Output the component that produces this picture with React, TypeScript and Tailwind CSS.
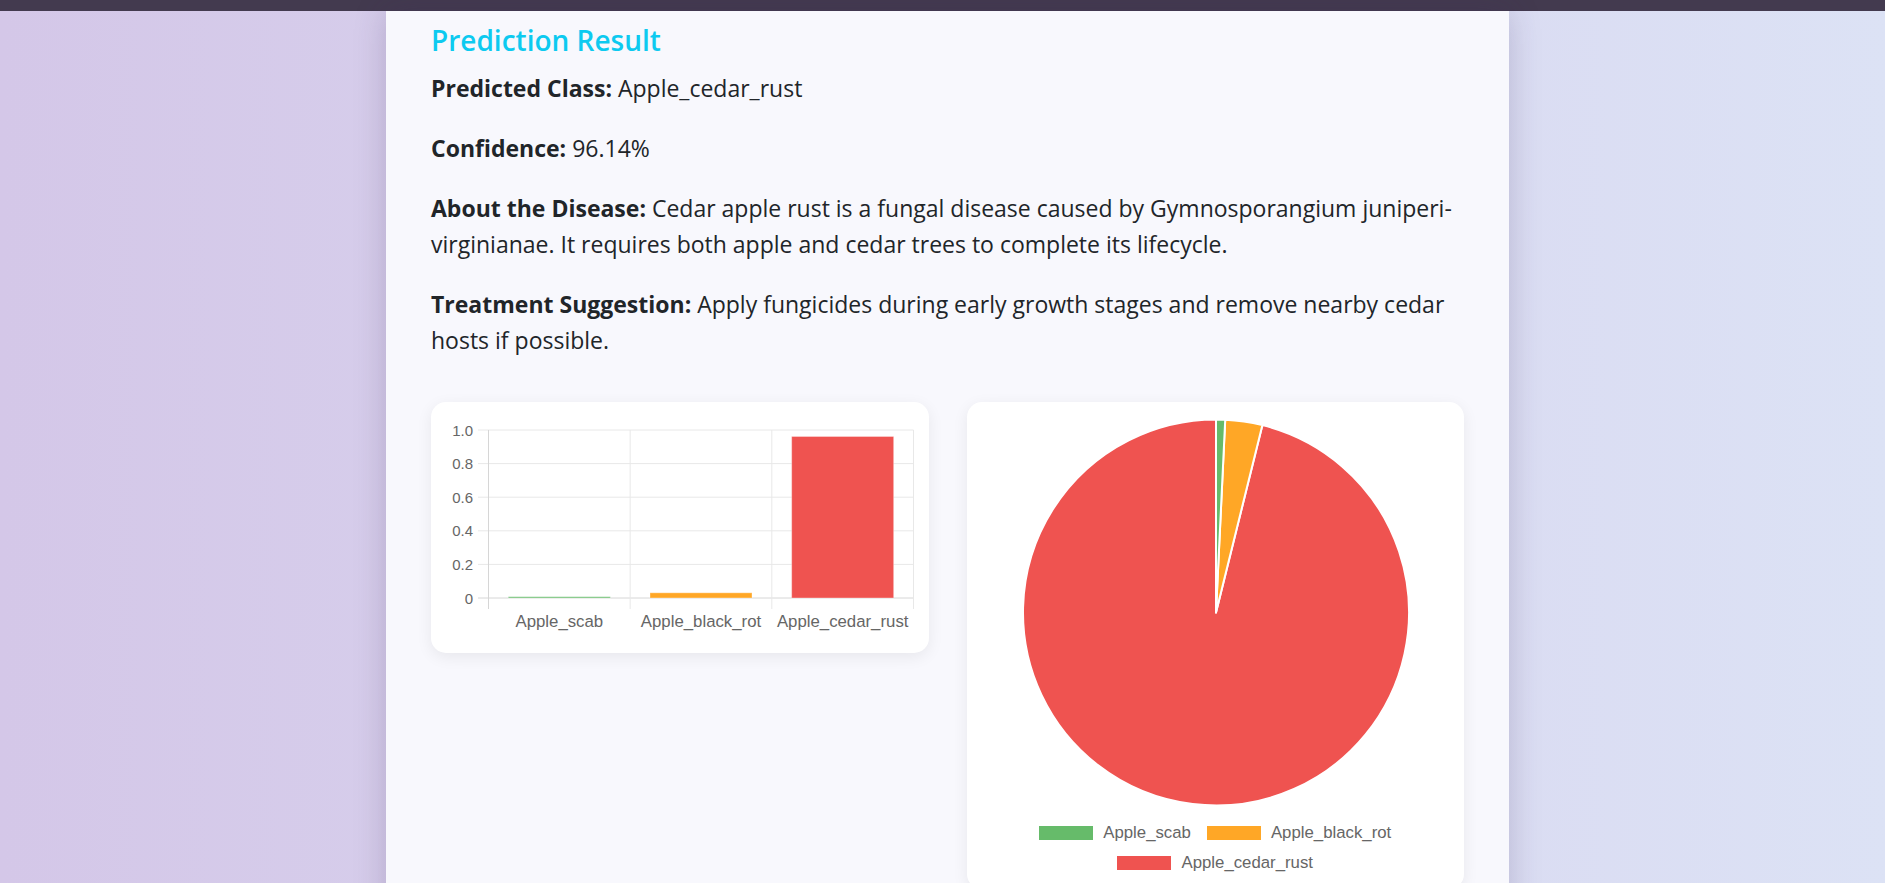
import React from "react";

const bars = [
  { label: "Apple_scab", value: 0.0076, color: "#66bb6a" },
  { label: "Apple_black_rot", value: 0.031, color: "#ffa726" },
  { label: "Apple_cedar_rust", value: 0.9614, color: "#ef5350" },
];

const ticks = ["1.0", "0.8", "0.6", "0.4", "0.2", "0"];

function BarChart() {
  const top = 13;
  const zero = 181;
  const step = (zero - top) / 5;
  const left = 42.5;
  const right = 467.5;
  const col = (right - left) / 3;
  return (
    <svg width="468" height="221" viewBox="0 0 468 221" className="block overflow-visible">
      {ticks.map((t, i) => (
        <g key={t}>
          <line x1={32} x2={right} y1={top + i * step} y2={top + i * step} stroke={i === 5 ? "#d6d6d6" : "#e8e8e8"} strokeWidth="1" />
          <text x={27} y={top + i * step} textAnchor="end" dominantBaseline="central" fontSize="15" fill="#666" fontFamily="'Liberation Sans', Arial, sans-serif">{t}</text>
        </g>
      ))}
      {[0, 1, 2, 3].map((i) => (
        <line key={i} x1={left + i * col} x2={left + i * col} y1={top} y2={192} stroke={i === 0 ? "#d6d6d6" : "#e8e8e8"} strokeWidth="1" />
      ))}
      {bars.map((b, i) => {
        const cx = left + col * i + col / 2;
        const h = b.value * (zero - top);
        return (
          <g key={b.label}>
            <rect x={cx - 51} y={zero - h} width={102} height={h} fill={b.color} stroke="rgba(255,255,255,0.35)" strokeWidth="1" />
            <text x={cx} y={204.5} textAnchor="middle" dominantBaseline="central" fontSize="16.8" fill="#666" fontFamily="'Liberation Sans', Arial, sans-serif">{b.label}</text>
          </g>
        );
      })}
    </svg>
  );
}

function PieChart() {
  return (
    <svg width="468" height="390" viewBox="0 0 468 390" className="block">
      <path d="M234 195.5 L280.35 8.15 A193 193 0 1 1 234 2.5 Z" fill="#ef5350" stroke="#fff" strokeWidth="2" strokeLinejoin="round" />
      <path d="M234 195.5 L243.21 2.72 A193 193 0 0 1 280.35 8.15 Z" fill="#ffa726" stroke="#fff" strokeWidth="2" strokeLinejoin="round" />
      <path d="M234 195.5 L234 2.5 A193 193 0 0 1 243.21 2.72 Z" fill="#66bb6a" stroke="#fff" strokeWidth="2" strokeLinejoin="round" />
    </svg>
  );
}

function LegendItem({ color, label }: { color: string; label: string }) {
  return (
    <div className="flex items-center gap-[10px]">
      <span className="block h-[14px] w-[54px]" style={{ backgroundColor: color }} />
      <span className="text-[16.8px] leading-[20px] text-[#666] font-['Liberation_Sans',Arial,sans-serif]">{label}</span>
    </div>
  );
}

export default function App() {
  return (
    <div className="min-h-screen bg-gradient-to-r from-[#d4c7e8] to-[#dce2f5] font-['Open_Sans','Noto_Sans',sans-serif] text-[#212529]">
      <div className="h-[11px] bg-[#433a4f]" />
      <div className="flex justify-center pl-[10px]">
        <div className="w-[1123px] bg-[#f8f8fd] px-[45px] pt-[12px] pb-12 shadow-[0_0_30px_rgba(60,40,90,0.22)]">
          <h2 className="text-[28px] leading-[34px] font-semibold text-[#0dcaf0]">Prediction Result</h2>
          <div className="mt-[13px] text-[23px] leading-[36px]">
            <p className="mb-[24px]"><strong className="font-bold">Predicted Class:</strong> Apple_cedar_rust</p>
            <p className="mb-[24px]"><strong className="font-bold">Confidence:</strong> 96.14%</p>
            <p className="mb-[24px]"><strong className="font-bold">About the Disease:</strong> Cedar apple rust is a fungal disease caused by Gymnosporangium juniperi-virginianae. It requires both apple and cedar trees to complete its lifecycle.</p>
            <p><strong className="font-bold">Treatment Suggestion:</strong> Apply fungicides during early growth stages and remove nearby cedar hosts if possible.</p>
          </div>
          <div className="mt-[44px] grid grid-cols-2 items-start gap-[38px]">
            <div className="rounded-[15px] bg-white p-[15px] shadow-[0_4px_16px_rgba(0,0,0,0.07)]">
              <BarChart />
            </div>
            <div className="rounded-[15px] bg-white px-[15px] pt-[15px] pb-[16px] shadow-[0_4px_16px_rgba(0,0,0,0.07)]">
              <PieChart />
              <div className="mt-[16px] flex flex-col items-center gap-[10px]">
                <div className="flex items-center gap-[16px]">
                  <LegendItem color="#66bb6a" label="Apple_scab" />
                  <LegendItem color="#ffa726" label="Apple_black_rot" />
                </div>
                <LegendItem color="#ef5350" label="Apple_cedar_rust" />
              </div>
            </div>
          </div>
        </div>
      </div>
    </div>
  );
}
